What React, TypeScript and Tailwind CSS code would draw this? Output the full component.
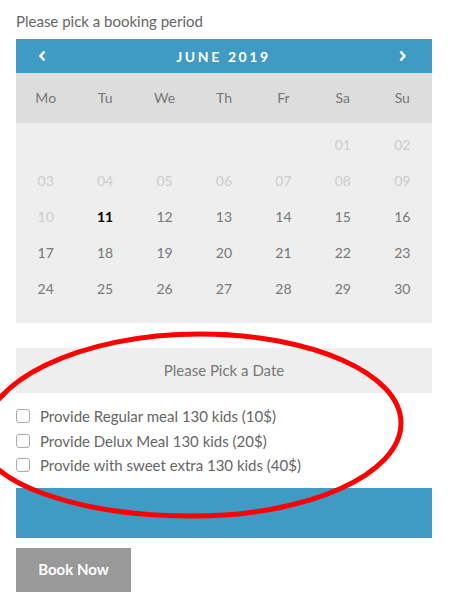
import React from "react";

const font = { fontFamily: '"Lato", "Liberation Sans", sans-serif' };

type Day = { n: string; state: "off" | "on" | "today" };

const rows: (Day | null)[][] = [
  [null, null, null, null, null, { n: "01", state: "off" }, { n: "02", state: "off" }],
  ["03", "04", "05", "06", "07", "08", "09"].map((n) => ({ n, state: "off" as const })),
  [
    { n: "10", state: "off" },
    { n: "11", state: "today" },
    ...["12", "13", "14", "15", "16"].map((n) => ({ n, state: "on" as const })),
  ],
  ["17", "18", "19", "20", "21", "22", "23"].map((n) => ({ n, state: "on" as const })),
  ["24", "25", "26", "27", "28", "29", "30"].map((n) => ({ n, state: "on" as const })),
];

const weekdays = ["Mo", "Tu", "We", "Th", "Fr", "Sa", "Su"];

const options = [
  "Provide Regular meal 130 kids (10$)",
  "Provide Delux Meal 130 kids (20$)",
  "Provide with sweet extra 130 kids (40$)",
];

export default function App() {
  return (
    <div className="relative w-[459px] h-[613px] bg-white overflow-hidden" style={font}>
      <div className="ml-4 w-[416px] pt-[10px]">
        <div className="text-[15px] leading-[22px] text-[#666]">Please pick a booking period</div>
        <div className="mt-[7px]">
          <div className="h-[34px] bg-[#3f9bc4] flex items-center justify-between pl-[22px] pr-[25px]">
            <svg width="9" height="12" viewBox="0 0 9 12">
              <polyline points="6.5,1.5 2.5,6 6.5,10.5" fill="none" stroke="white" strokeWidth="2.6" />
            </svg>
            <span className="text-white text-[14px] font-bold tracking-[2.6px] pl-[2px]">JUNE 2019</span>
            <svg width="9" height="12" viewBox="0 0 9 12">
              <polyline points="2.5,1.5 6.5,6 2.5,10.5" fill="none" stroke="white" strokeWidth="2.6" />
            </svg>
          </div>
          <div className="h-[50px] bg-[#dddddd] grid grid-cols-7 items-center pb-[2px]">
            {weekdays.map((w) => (
              <div key={w} className="text-center text-[14px] text-[#777]">
                {w}
              </div>
            ))}
          </div>
          <div className="bg-[#eeeeee] pt-[3px] pb-[17px]">
            {rows.map((r, i) => (
              <div key={i} className="grid grid-cols-7 h-9 items-center">
                {r.map((d, j) => (
                  <div
                    key={j}
                    className={
                      "text-center text-[14px] " +
                      (d === null
                        ? ""
                        : d.state === "off"
                        ? "text-[#cccccc]"
                        : d.state === "today"
                        ? "text-black font-bold"
                        : "text-[#777]")
                    }
                  >
                    {d ? d.n : ""}
                  </div>
                ))}
              </div>
            ))}
          </div>
        </div>
        <div className="mt-[25px] h-[45px] bg-[#eeeeee] flex items-center justify-center text-[15px] text-[#777]">
          Please Pick a Date
        </div>
        <div className="mt-[11px] flex flex-col">
          {options.map((o) => (
            <label key={o} className="flex items-center h-[24.5px] text-[15px] text-[#666]">
              <span className="w-[14px] h-[14px] border border-[#aaa] rounded-[3px] bg-white mr-[10px]" />
              {o}
            </label>
          ))}
        </div>
        <div className="mt-[10px] h-[50px] bg-[#3f9bc4]" />
        <div className="mt-[10px] w-[115px] h-[44px] bg-[#999] flex items-center justify-center text-white font-bold text-[15px]">
          Book Now
        </div>
      </div>
      <svg className="absolute left-0 top-0 pointer-events-none" width="459" height="613">
        <path
          d="M200 334 C311 334 401 373.8 401 423 C401 474.4 307.9 516 193 516 C76.5 516 -18 482 -18 440 C-18 381.5 79.6 334 200 334 Z"
          fill="none"
          stroke="#ff0000"
          strokeWidth="5"
        />
      </svg>
    </div>
  );
}
